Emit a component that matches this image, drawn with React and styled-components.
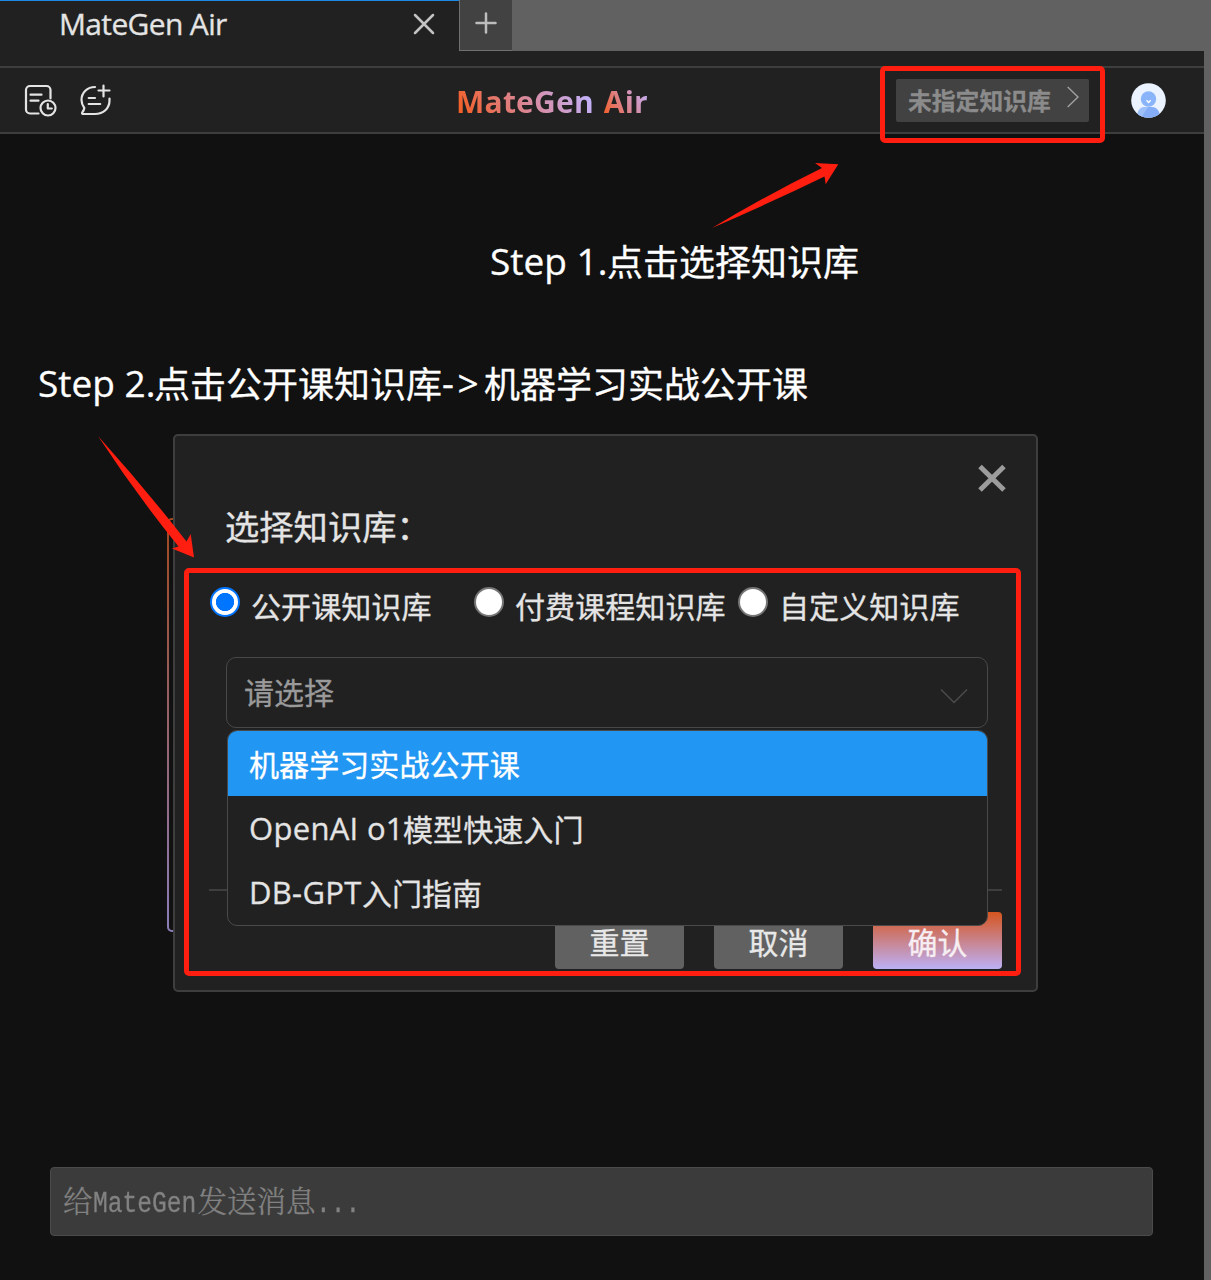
import React from "react";
import styled, { createGlobalStyle, css } from "styled-components";

const GlobalStyle = createGlobalStyle`
  *, *::before, *::after { box-sizing: border-box; }
  body {
    margin: 0;
    background: #111111;
    font-family: "Open Sans", "Noto Sans CJK SC", sans-serif;
    color: #e4e4e4;
    -webkit-text-stroke: 0.3px currentColor;
  }
`;

const Screen = styled.div`
  position: relative;
  display: flex;
  height: 1280px;
  overflow: hidden;
`;

const Panel = styled.div`
  position: relative;
  flex: 1;
  display: flex;
  flex-direction: column;
  background: #111111;
`;

const Gutter = styled.div`
  width: 7px;
  background: #616161;
`;

const TabStrip = styled.div`
  display: flex;
  height: 51px;
  background: #616161;
`;

const Tab = styled.div`
  display: flex;
  justify-content: space-between;
  width: 459px;
  padding: 0 24px 0 59px;
  background: #212121;
  border-top: 1px solid #1e88e5;
`;

const TabTitle = styled.span`
  font-size: 30px;
  line-height: 46px;
  letter-spacing: -0.65px;
  white-space: nowrap;
`;

const TabClose = styled.svg`
  width: 22px;
  height: 22px;
  margin-top: 12px;
`;

const NewTab = styled.div`
  display: flex;
  justify-content: center;
  width: 53px;
  padding-top: 12px;
  background: #424242;
  border-left: 1px solid #707070;
  border-bottom: 1px solid #707070;
`;

const TabFooter = styled.div`
  height: 17px;
  background: #212121;
  border-bottom: 2px solid #3e3e3e;
`;

const Header = styled.header`
  display: grid;
  grid-template-columns: 1fr auto 1fr;
  align-items: center;
  height: 66px;
  padding: 0 38px 0 24px;
  background: #212121;
  border-bottom: 2px solid #3e3e3e;
`;

const HeaderIcons = styled.div`
  display: flex;
  gap: 22px;
`;

const Brand = styled.h1`
  display: flex;
  gap: 10px;
  margin: 3px 0 0;
  padding-right: 86px;
  font-size: 30px;
  font-weight: 700;
  line-height: 42px;
  letter-spacing: 0.2px;
  -webkit-text-stroke: 0;
`;

const BrandWord = styled.span`
  background: linear-gradient(60deg, #f4602a 8%, #d98798 50%, #c3b2fb 92%);
  -webkit-background-clip: text;
  background-clip: text;
  color: transparent;
`;

const HeaderActions = styled.div`
  display: flex;
  justify-content: flex-end;
  align-items: center;
  gap: 42px;
`;

const BasePill = styled.button`
  display: flex;
  align-items: center;
  justify-content: space-between;
  width: 193px;
  height: 43px;
  padding: 0 10px 2px 12px;
  border: 0;
  border-radius: 2px;
  background: #424242;
  color: #8b8b8b;
  font-family: inherit;
  font-size: 23.8px;
  font-weight: 700;
  white-space: nowrap;
`;

const PillChevron = styled.svg`
  margin-bottom: 5px;
`;

const Content = styled.main`
  flex: 1;
  padding: 384px 167px 0;
`;

const WelcomeCard = styled.div`
  height: 414px;
  padding: 2px;
  border-radius: 5px;
  background: linear-gradient(#a1491f, #8b7db8);
  &::before {
    content: "";
    display: block;
    height: 100%;
    border-radius: 3px;
    background: #111111;
  }
`;

const Composer = styled.footer`
  padding: 0 51px 44px 50px;
`;

const MessageBox = styled.div`
  height: 69px;
  padding: 11px 0 0 12px;
  border: 1px solid #4b4b4b;
  border-radius: 4px;
  background: #3b3b3b;
  color: #828282;
  font-family: "Noto Serif CJK SC", "Noto Sans CJK SC", serif;
  font-size: 29.5px;
  font-weight: 300;
  line-height: 40px;
  white-space: nowrap;
`;

const MonoRun = styled.span`
  display: inline-block;
  width: ${(p) => p.$width}px;
  font-family: "Liberation Mono", monospace;
  line-height: 1;
  transform: scaleX(0.834);
  transform-origin: 0 50%;
`;

const Dialog = styled.section`
  position: absolute;
  left: 173px;
  top: 434px;
  width: 865px;
  height: 558px;
  padding: 27px 34px 0;
  border: 2px solid #3e3e3e;
  border-radius: 5px;
  background: #212121;
`;

const CloseRow = styled.div`
  display: flex;
  justify-content: flex-end;
  height: 30px;
  margin-right: -5px;
`;

const DialogTitle = styled.h2`
  margin: 11px 0 0 16px;
  font-size: 34.3px;
  font-weight: 400;
  line-height: 46px;
`;

const RadioRow = styled.div`
  display: grid;
  grid-template-columns: repeat(3, 264px);
  margin: 37px 0 0 1px;
`;

const RadioLabel = styled.label`
  display: flex;
  gap: 11px;
  font-size: 30.1px;
  line-height: 40px;
  white-space: nowrap;
  color: #e4e4e4;
`;

const RadioDot = styled.span`
  flex: none;
  width: 30px;
  height: 30px;
  border-radius: 50%;
  border: 2px solid #767676;
  background: #ffffff;
  ${(p) =>
    p.$checked &&
    css`
      border: 2.5px solid #0075ff;
      background: radial-gradient(circle, #0075ff 8.8px, #ffffff 9.4px);
    `}
`;

const SelectWrap = styled.div`
  position: relative;
  width: 762px;
  margin: 30px 0 0 17px;
`;

const SelectField = styled.div`
  display: flex;
  justify-content: space-between;
  align-items: center;
  height: 71px;
  padding: 0 19px 4px 17px;
  border: 1px solid #484848;
  border-radius: 10px;
  font-size: 30px;
  color: #9a9a9a;
`;

const SelectChevron = styled.svg`
  margin-top: 11px;
`;

const Menu = styled.ul`
  position: absolute;
  top: 73px;
  left: 1px;
  right: 0;
  height: 196px;
  margin: 0;
  padding: 0;
  overflow: hidden;
  list-style: none;
  border: 1px solid #4a4a4a;
  border-radius: 10px;
  background: #212121;
  z-index: 1;
`;

const Option = styled.li`
  height: 64px;
  padding-left: 21px;
  font-size: 31px;
  line-height: 64px;
  white-space: nowrap;
  ${(p) =>
    p.$active &&
    css`
      height: 65px;
      line-height: 65px;
      background: #2196f3;
      color: #ffffff;
    `}
`;

const Latin = styled.span`
  display: inline-block;
  width: ${(p) => p.$width}px;
  letter-spacing: ${(p) => p.$spacing || 0}px;
`;

const Han = styled.span`
  font-size: ${(p) => p.$size}px;
  vertical-align: -1px;
  line-height: 1;
`;

const Divider = styled.div`
  height: 2px;
  margin-top: 161px;
  background: #3e3e3e;
`;

const Buttons = styled.div`
  display: flex;
  justify-content: flex-end;
  gap: 30px;
  margin-top: 21px;
`;

const Button = styled.button`
  width: 129px;
  height: 57px;
  padding: 4px 0 0;
  border: 0;
  border-radius: 4px;
  background: ${(p) => (p.$primary ? "linear-gradient(#d6551f, #bcb0f6)" : "#616161")};
  color: ${(p) => (p.$primary ? "#f6eef2" : "#e8e8e8")};
  font-family: inherit;
  font-size: 30px;
  line-height: 40px;
`;

const Note = styled.p`
  position: absolute;
  left: ${(p) => p.$x}px;
  top: ${(p) => p.$y}px;
  margin: 0;
  font-size: 37px;
  line-height: 52px;
  color: #ffffff;
  white-space: nowrap;
`;

const Highlight = styled.div`
  position: absolute;
  left: ${(p) => p.$x}px;
  top: ${(p) => p.$y}px;
  width: ${(p) => p.$w}px;
  height: ${(p) => p.$h}px;
  border: 5px solid #ff1e0f;
  border-radius: 5px;
`;

const Arrow = styled.svg`
  position: absolute;
  left: ${(p) => p.$x}px;
  top: ${(p) => p.$y}px;
  fill: #ff1e0f;
`;

const HistoryIcon = () => (
  <svg width="33" height="34" viewBox="0 0 33 34" fill="none" stroke="#e4e4e4" strokeWidth="2.200" strokeLinecap="round" strokeLinejoin="round">
    <path d="M14.500 30.500H6a4 4 0 0 1-4-4V7a4 4 0 0 1 4-4h16.500a4 4 0 0 1 4 4V15.500" />
    <path d="M6.500 11.700h11M6.500 17.700h8" />
    <circle cx="24" cy="25" r="7.500" />
    <path d="M23.800 21v4.500h4" />
  </svg>
);

const NewChatIcon = () => (
  <svg width="34" height="34" viewBox="0 0 34 34" fill="none" stroke="#e4e4e4" strokeWidth="2.200" strokeLinecap="round" strokeLinejoin="round">
    <path d="M16 4C8.200 4 2.500 9.800 2.500 17c0 3.200 1 5.500 2.800 8-.2 1.700-1 3-2 4.300-.6 1 0 1.700 1 1.700H16c8.300 0 14.500-5.500 14.500-13.500v-2" />
    <path d="M24.500 2.500v11M19.500 7.500h11M9.700 15h6.300M9.700 21h11.500" />
  </svg>
);

const Avatar = () => (
  <svg width="35" height="35" viewBox="0 0 35 35">
    <defs>
      <clipPath id="avatarClip">
        <circle cx="17.500" cy="17.500" r="17.300" />
      </clipPath>
    </defs>
    <circle cx="17.500" cy="17.500" r="17.300" fill="#eaf3ff" />
    <g clipPath="url(#avatarClip)">
      <path d="M6 35c0-7 3-11 8-11h7c5 0 8 4 8 11z" fill="#86aef8" />
      <circle cx="17.500" cy="16" r="7.700" fill="#8ab4f9" />
      <path d="M6 35c0-7 3-11 8-11h3L10 35z" fill="#9ec1fb" />
    </g>
    <path d="M15.500 17.300l2.100 2.200 2.100-2.200" fill="none" stroke="#ffffff" strokeWidth="1.300" />
  </svg>
);

const bases = ["公开课知识库", "付费课程知识库", "自定义知识库"];

export default function App() {
  return (
    <Screen>
      <GlobalStyle />
      <Panel>
        <TabStrip>
          <Tab>
            <TabTitle>MateGen Air</TabTitle>
            <TabClose viewBox="0 0 22 22" stroke="#c4c4c4" strokeWidth="2.500" strokeLinecap="round">
              <path d="M2 2l18 18M20 2L2 20" />
            </TabClose>
          </Tab>
          <NewTab>
            <svg width="22" height="22" viewBox="0 0 22 22" stroke="#bdbdbd" strokeWidth="2.500" strokeLinecap="round">
              <path d="M11 1.500v19M1.500 11h19" />
            </svg>
          </NewTab>
        </TabStrip>
        <TabFooter />
        <Header>
          <HeaderIcons>
            <HistoryIcon />
            <NewChatIcon />
          </HeaderIcons>
          <Brand>
            <BrandWord>MateGen</BrandWord>
            <BrandWord>Air</BrandWord>
          </Brand>
          <HeaderActions>
            <BasePill>
              未指定知识库
              <PillChevron width="12" height="22" viewBox="0 0 12 22" fill="none" stroke="#a0a0a0" strokeWidth="1.400">
                <path d="M0.700 1l10.300 10L0.700 21" />
              </PillChevron>
            </BasePill>
            <Avatar />
          </HeaderActions>
        </Header>
        <Content>
          <WelcomeCard />
        </Content>
        <Composer>
          <MessageBox>
            <span>给</span>
            <MonoRun $width={105}>MateGen</MonoRun>
            <span>发送消息</span>
            <MonoRun $width={45}>...</MonoRun>
          </MessageBox>
        </Composer>

        <Dialog>
          <CloseRow>
            <svg width="30" height="30" viewBox="0 0 30 30" stroke="#9c9c9c" strokeWidth="5">
              <path d="M3 3.500l24 23.500M27 3.500L3 27" />
            </svg>
          </CloseRow>
          <DialogTitle>选择知识库：</DialogTitle>
          <RadioRow>
            {bases.map((name, i) => (
              <RadioLabel key={name}>
                <RadioDot $checked={i === 0} />
                {name}
              </RadioLabel>
            ))}
          </RadioRow>
          <SelectWrap>
            <SelectField>
              请选择
              <SelectChevron width="28" height="18" viewBox="0 0 28 18" fill="none" stroke="#4c4c4c" strokeWidth="1.500">
                <path d="M1 2.500l13 13 13-13" />
              </SelectChevron>
            </SelectField>
            <Menu>
              <Option $active>
                <Han $size={30.1}>机器学习实战公开课</Han>
              </Option>
              <Option>
                <Latin $width={154} $spacing={0.3}>OpenAI o1</Latin>
                <Han $size={30.1}>模型快速入门</Han>
              </Option>
              <Option>
                <Latin $width={113} $spacing={0.3}>DB-GPT</Latin>
                <Han $size={30}>入门指南</Han>
              </Option>
            </Menu>
          </SelectWrap>
          <Divider />
          <Buttons>
            <Button>重置</Button>
            <Button>取消</Button>
            <Button $primary>确认</Button>
          </Buttons>
        </Dialog>
      </Panel>
      <Gutter />

      <Highlight $x={880} $y={66} $w={225} $h={77} />
      <Highlight $x={184} $y={568} $w={837} $h={408} />
      <Note $x={490} $y={235}>
        <Latin $width={117}>Step 1.</Latin>
        <Han $size={36}>点击选择知识库</Han>
      </Note>
      <Note $x={38} $y={357}>
        <Latin $width={116}>Step 2.</Latin>
        <Han $size={36}>点击公开课知识库</Han>
        <Latin $width={42} $spacing={3.5}>-&gt;</Latin>
        <Han $size={36}>机器学习实战公开课</Han>
      </Note>
      <Arrow $x={710} $y={160} width="130" height="70" viewBox="710 160 130 70">
        <path d="M712 228Q765 196 822 168L815 163L838.300 164.300L825.700 184.300L824.500 176.500Q770 203 712 228Z" />
      </Arrow>
      <Arrow $x={96} $y={434} width="100" height="126" viewBox="96 434 100 126">
        <path d="M98 436Q144 487 186.500 541.500L190.700 534L194 557.500L172 548.500L178.500 546.500Q136 494 98 436Z" />
      </Arrow>
    </Screen>
  );
}
